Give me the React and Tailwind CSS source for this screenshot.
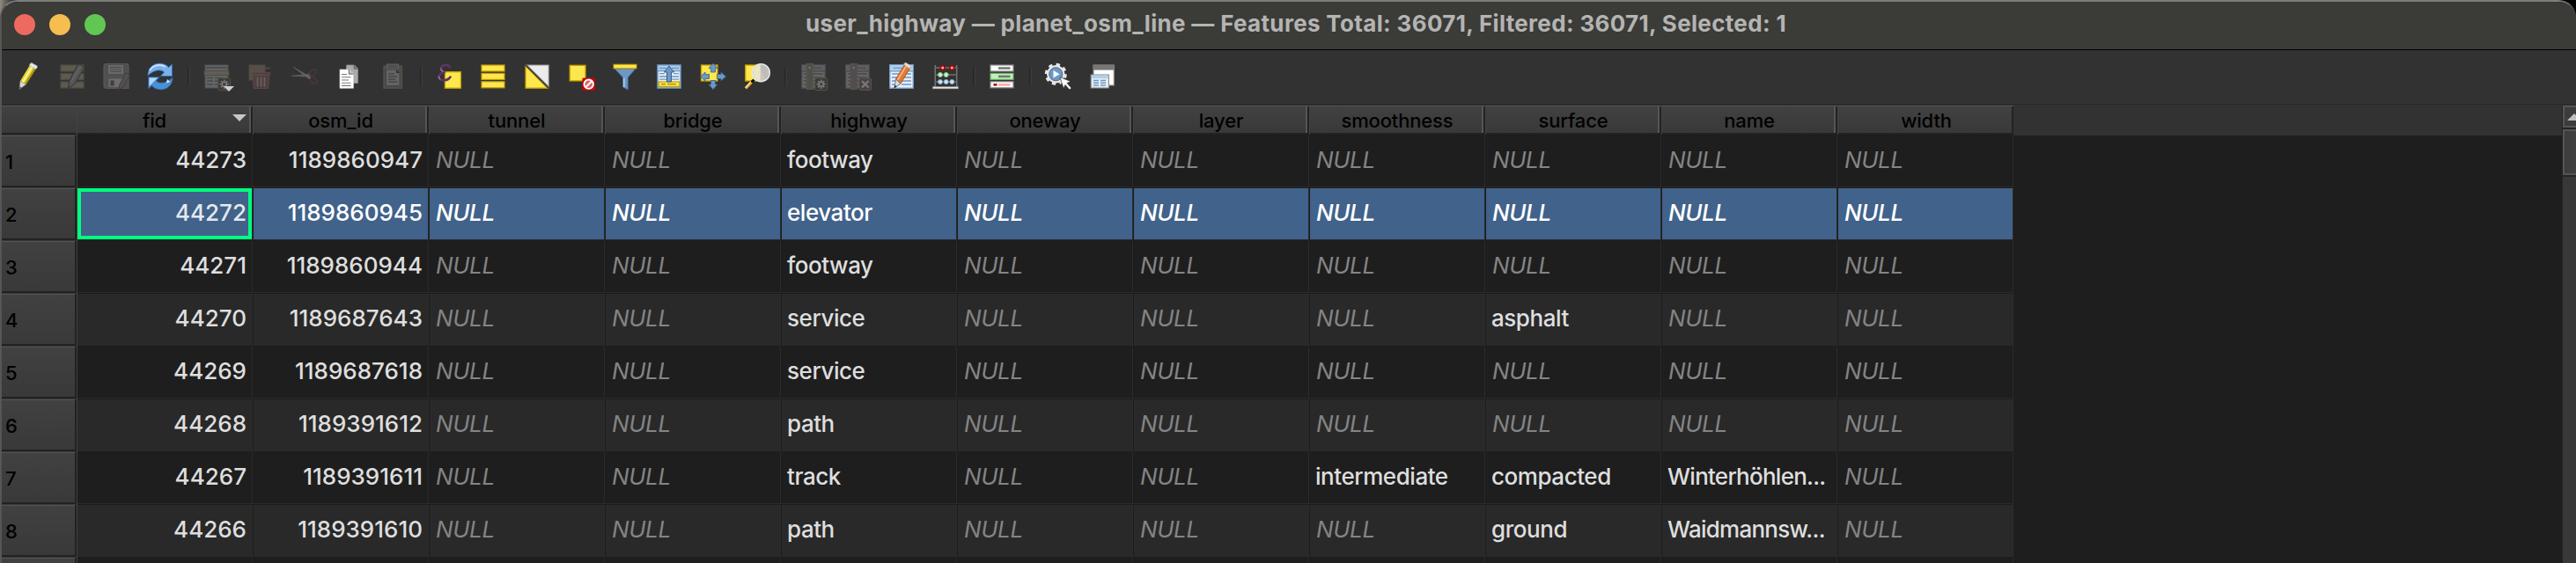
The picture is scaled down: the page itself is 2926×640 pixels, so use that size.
import React from "react";

const NAMES = ["fid", "osm_id", "tunnel", "bridge", "highway", "oneway", "layer", "smoothness", "surface", "name", "width"];

const N = null;
const ROWS = [
  ["44273", "1189860947", N, N, "footway", N, N, N, N, N, N],
  ["44272", "1189860945", N, N, "elevator", N, N, N, N, N, N],
  ["44271", "1189860944", N, N, "footway", N, N, N, N, N, N],
  ["44270", "1189687643", N, N, "service", N, N, N, "asphalt", N, N],
  ["44269", "1189687618", N, N, "service", N, N, N, N, N, N],
  ["44268", "1189391612", N, N, "path", N, N, N, N, N, N],
  ["44267", "1189391611", N, N, "track", N, N, "intermediate", "compacted", "Winterhöhlen...", N],
  ["44266", "1189391610", N, N, "path", N, N, N, "ground", "Waidmannsw...", N],
];
const SELECTED = 1;

const Y = "#fde74c";
const YB = "#c4a000";
const BL = "#6d97c4";
const BD = "#34608f";

function Icon({ dim, children }) {
  return (
    <div className="flex w-[50px] shrink-0 justify-center">
      <svg viewBox="0 0 32 32" className={dim ? "size-8 overflow-visible opacity-[0.34] saturate-[0.55]" : "size-8 overflow-visible"}>
        {children}
      </svg>
    </div>
  );
}

function Sep() {
  return (
    <div className="flex w-3.5 shrink-0 justify-center">
      <div className="h-[22px] w-[3px] border-l border-r border-l-[#282828] border-r-[#3c3c3c] bg-[#2e2e2e]" />
    </div>
  );
}

function Pencil({ body = "#e8d534", light = "#fff9a0", dark = "#a8941a" }) {
  return (
    <g>
      <path d="M7 21 L18.500 2 L25.500 6 L13.500 25 Z" fill={body} />
      <path d="M9 22 L20.500 3 L22 4 L10.500 23 Z" fill={light} />
      <path d="M11.800 24 L23.600 5 L25.500 6 L13.500 25 Z" fill={dark} />
      <path d="M18 1.500 L20 .5 L26.300 4 L26 6.500 L24.500 7.500 L17.500 3.500 Z" fill="#e6e6ea" stroke="#a9a9b0" strokeWidth=".6" />
      <path d="M7 21 L13.500 25 L6 30.500 Z" fill="#d8d8d4" stroke="#8a8a86" strokeWidth=".5" />
      <path d="M6.200 27 L8.600 28.500 L5.700 31 Z" fill="#666" />
    </g>
  );
}

function Doc({ line = BL, head = "#aed0ea", page = "#e8eef5" }) {
  return (
    <g>
      <rect x="2.700" y="2.700" width="26.600" height="26.600" fill={page} stroke={line} strokeWidth="1.400" />
      <rect x="3.400" y="3.400" width="25.200" height="6" fill={head} />
      <path d="M6.700 6.300h18.600M2.700 9.900h26.600" stroke={line} strokeWidth="1.200" />
      <path d="M5 13h9m2 0h11M5 17h9m2 0h11M5 21h9m2 0h11M5 25h9m2 0h11" stroke={line} strokeWidth="1.300" />
    </g>
  );
}

function GearBadge() {
  return (
    <g>
      <rect x="17.800" y="17.800" width="13.800" height="13.800" rx="1.500" fill="#4d462a" stroke="#a3935a" />
      <path d="M24.700 19.500v10.400M19.500 24.700h10.400M21 21l7.400 7.400M28.400 21L21 28.400" stroke="#fff" strokeWidth="1.700" />
      <circle cx="24.700" cy="24.700" r="3.200" fill="#fff" />
      <circle cx="24.700" cy="24.700" r="1.700" fill="#555" />
    </g>
  );
}

function Toolbar() {
  return (
    <div className="flex h-[61px] shrink-0 items-center bg-[#323232] pb-px pl-[5px]">
      <Icon><Pencil /></Icon>
      <Icon dim>
        <g fill="#b3a878" stroke="#8d8040" strokeWidth="1.200">
          <rect x="3" y="3" width="26" height="7" /><rect x="3" y="12.500" width="26" height="7" /><rect x="3" y="22" width="26" height="7" />
        </g>
        <path d="M12.500 21 L23 1.500 L30 5.500 L18.500 25 L11.500 29.500Z" fill="#999" stroke="#333" />
        <path d="M15 22L26 3.500" stroke="#ddd" />
      </Icon>
      <Icon dim>
        <path d="M2 4a2.500 2.500 0 0 1 2.500-2.500h23A2.500 2.500 0 0 1 30 4v25.500H4L2 27.500Z" fill="#8c8c8c" stroke="#99a37c" strokeWidth="1.200" />
        <rect x="6.500" y="2.500" width="18" height="11" fill="#d4d4d4" stroke="#888" />
        <path d="M9 5.500h13M9 8h13M9 10.500h13" stroke="#777" />
        <rect x="7.500" y="18.500" width="16" height="9.500" fill="#ddd" />
        <rect x="9.500" y="20.500" width="4" height="6" fill="#555" />
        <path d="M20 25 L27 11.500 L31.500 14.500 L24 28 L19 30.500Z" fill="#a48379" stroke="#6b5148" />
      </Icon>
      <Icon>
        <path d="M2 15 C1.500 5 11 -1.500 20.500 2 C23 3 24.500 4.200 25.500 5.500 L29.500 2 L29.500 15.500 L16.500 15.500 L20.500 11 C17 7.500 9 8 2 15Z" fill="#79b0ec" stroke="#2f6fb4" strokeWidth=".8" />
        <path d="M4 9C8 2.500 17 1.500 22 5" stroke="#c5dfff" strokeWidth="1.800" fill="none" />
        <path d="M30 17 C30.500 27 21 33.500 11.500 30 C9 29 7.500 27.800 6.500 26.500 L2.500 30 L2.500 16.500 L15.500 16.500 L11.500 21 C15 24.500 23 24 30 17Z" fill="#4b8ed4" stroke="#245f9f" strokeWidth=".8" />
        <path d="M3.500 17.500h9.500L3.500 27Z" fill="#b5d6fb" />
        <path d="M24 19l3 3-4 1.500Z" fill="#dbeaff" />
      </Icon>
      <Sep />
      <div className="relative">
        <Icon dim>
          <rect x="3" y="3" width="26" height="26" fill="#c0c4c8" stroke="#7e8d9c" />
          <path d="M4 6h24" stroke="#7a8896" strokeWidth="2" />
          <rect x="2" y="9.500" width="28" height="5" fill="#c1b486" stroke="#8d8040" />
          <path d="M5 17.500h7m2 0h8M5 21h7m2 0h3M5 25h7m2 0h3" stroke="#68798a" strokeWidth="1.500" />
          <GearBadge />
        </Icon>
        <svg viewBox="0 0 12 6" className="absolute top-[27px] left-[33px] h-1.5 w-3"><path d="M0 0h12L6 6Z" fill="#cfcfcf" /></svg>
      </div>
      <Icon dim>
        <rect x="3" y="3" width="18" height="17" fill="#9a8f60" stroke="#8a7c3a" />
        <path d="M3 6.500h24" stroke="#d56a6a" strokeWidth="1.500" />
        <path d="M6 11.500h21v2H6Z" fill="#a84848" stroke="#c86464" />
        <path d="M7 14.500h19l-1.500 15h-16Z" fill="#a05050" stroke="#cc6a6a" />
        <path d="M12.500 16.500v11M16.500 16.500v11M20.500 16.500v11" stroke="#e0b0b0" strokeWidth="1.700" />
      </Icon>
      <Icon dim>
        <path d="M1 15.300L21.500 13.200V16.200Z M3.500 5.500L23 16.800L21.500 19Z" fill="#ddd" stroke="#aaa" strokeWidth=".8" />
        <ellipse cx="25.500" cy="11.500" rx="4.500" ry="2.600" transform="rotate(-35 25.500 11.500)" fill="none" stroke="#c03a3a" strokeWidth="1.200" />
        <ellipse cx="26" cy="20.500" rx="4.500" ry="2.800" transform="rotate(45 26 20.500)" fill="none" stroke="#c03a3a" strokeWidth="1.200" />
      </Icon>
      <Icon>
        <path d="M13.500 3h9l4 4v16.500h-13Z" fill="#aaa" stroke="#8b8b8b" strokeWidth=".8" />
        <path d="M22 3v4.500h4.500" fill="#777" stroke="#666" strokeWidth=".7" />
        <path d="M6 8h10.500l5 5v16.300H6Z" fill="#fff" stroke="#cfcfcf" strokeWidth=".7" />
        <path d="M16.200 8v5.200h5.300" fill="#bbb" stroke="#555" strokeWidth=".8" />
        <path d="M8 13.500h6M8 16.800h10.500M8 20h8M8 23.200h10.500M8 26.400h10.500" stroke="#777" strokeWidth="1.100" />
      </Icon>
      <Icon dim>
        <rect x="6" y="4" width="20.500" height="25.200" fill="#867e6e" stroke="#99886a" strokeWidth="1.400" />
        <rect x="9.500" y="2" width="13" height="5" fill="#888" stroke="#bbb" />
        <path d="M8.500 8h12l3.500 3.500V26.500H8.500Z" fill="#c4c4c4" stroke="#666" />
        <path d="M20 8v4h4" fill="#333" />
        <path d="M11 13h7M11 16h10M11 19h8M11 22h10" stroke="#444" strokeWidth="1.200" />
      </Icon>
      <Sep />
      <Icon>
        <rect x="11.400" y="10.700" width="18" height="18.500" fill={Y} stroke={YB} strokeWidth="1.300" />
        <path d="M17 5.500C15.500 2 9 2 7.500 5.500C6.500 8.500 8.500 10.700 12 11C7 11 3.500 14.500 5 17.800C6.800 21.500 14.500 21.200 17.500 16.500" fill="none" stroke="#5c3566" strokeWidth="2.600" strokeLinecap="round" />
        <path d="M6.800 6.500C6.600 8.500 8 10 9.800 10.600M4.300 15.500C4 17.300 5 18.500 6.300 19.300" fill="none" stroke="#ad7fa8" strokeWidth="1.100" />
      </Icon>
      <Icon>
        <g fill={Y} stroke={YB} strokeWidth="1.200">
          <rect x="3" y="3" width="26" height="7" /><rect x="3" y="12.400" width="26" height="7" /><rect x="3" y="21.800" width="26" height="7" />
        </g>
      </Icon>
      <Icon>
        <path d="M4.500 3h24.700v24.500Z" fill="#ececec" stroke="#9a9a9a" strokeWidth="1.100" />
        <path d="M3 4v25.200h25Z" fill={Y} stroke={YB} strokeWidth="1.300" />
        <path d="M3 3L29 29" stroke="#333" strokeWidth="1.400" />
      </Icon>
      <Icon>
        <rect x="3.200" y="3.300" width="17.800" height="17.600" fill={Y} stroke={YB} strokeWidth="1.300" />
        <rect x="17.400" y="17.400" width="14.500" height="14.500" rx="1.500" fill="#cc0000" />
        <circle cx="24.700" cy="24.700" r="5.200" fill="#d96464" stroke="#fff" strokeWidth="1.900" />
        <path d="M21.200 28.200L28.200 21.200" stroke="#fff" strokeWidth="2" />
      </Icon>
      <Icon>
        <path d="M4 7h24L19.300 17V31L13.500 28V17Z" fill={BL} stroke="#3d6a9b" strokeWidth=".8" />
        <path d="M14.800 17.500V28" stroke="#b4cde8" strokeWidth="1.600" />
        <rect x="3" y="2.200" width="26" height="4.600" fill={Y} stroke={YB} strokeWidth="1" />
      </Icon>
      <Icon>
        <rect x="3" y="3" width="26" height="26" fill="#e8eef5" stroke={BL} strokeWidth="1.600" />
        <rect x="3.800" y="3.800" width="24.400" height="5.400" fill="#aed0ea" />
        <path d="M5 6.500h8m6 0h8M3 9.600h26M5 12.700h6m10 0h6M5 16h8m6 0h8M5 19.200h8m6 0h8" stroke={BL} strokeWidth="1.300" />
        <rect x="4.200" y="22" width="23.600" height="5.400" fill={Y} stroke={YB} strokeWidth="1.200" />
        <path d="M7 24.700h5m2 0h10" stroke="#a68a00" strokeWidth="1.200" />
        <path d="M16 4L21.500 11H18.500V22H13.500V11H10.500Z" fill={BL} stroke={BD} strokeWidth="1" />
      </Icon>
      <Icon>
        <rect x="2.500" y="3" width="18.500" height="18" fill={Y} stroke={YB} strokeWidth="1.300" />
        <g fill={BL} stroke={BD} strokeWidth=".8">
          <path d="M16 1L21 6.500H18.500V11H13.500V6.500H11Z" /><path d="M16 30.700L21 25H18.500V20.500H13.500V25H11Z" />
          <path d="M1.500 16L7 11V13.500H11.500V18.500H7V21Z" /><path d="M30.500 16L25 11V13.500H20.500V18.500H25V21Z" />
        </g>
      </Icon>
      <Icon>
        <rect x="2.700" y="3" width="17" height="18" fill={Y} stroke={YB} strokeWidth="1.300" />
        <path d="M3 29.500L10 22" stroke="#f0a830" strokeWidth="3.200" />
        <path d="M2.700 28.500L9 21.700" stroke="#ffe9b0" strokeWidth="1.200" />
        <path d="M9.500 22.500L12.500 19.500" stroke="#111" strokeWidth="3" />
        <circle cx="20.300" cy="11.700" r="10" fill="#c6c6c4" stroke="#e8e8e4" strokeWidth="1.500" />
        <path d="M19.700 2.500A9.300 9.300 0 0 0 19.700 21Z" fill="#e9e6c0" />
        <path d="M19.700 2.500h1.500A9.300 9.300 0 0 1 26 19Q20 12 19.700 2.500" fill="#b4b4b4" opacity=".5" />
      </Icon>
      <Sep />
      <Icon dim>
        <Doc line="#6f7780" head="#b0b6bc" page="#c9cbcd" />
        <rect x="8" y="1.500" width="7.500" height="29" fill="#8d8569" stroke="#a59c70" />
        <circle cx="11.700" cy="6" r="1.200" fill="#eee" />
        <GearBadge />
      </Icon>
      <Icon dim>
        <Doc line="#6f7780" head="#b0b6bc" page="#c9cbcd" />
        <rect x="8" y="1.500" width="7.500" height="29" fill="#93807c" stroke="#ab8c84" />
        <circle cx="11.700" cy="6" r="1.200" fill="#eee" />
        <rect x="18" y="18" width="13.500" height="13.500" rx="1.500" fill="#806058" stroke="#b48a84" />
        <path d="M21 21l7.500 7.500M28.500 21L21 28.500" stroke="#fff" strokeWidth="2.400" />
      </Icon>
      <Icon>
        <Doc />
        <path d="M9.500 19 L19.500 2.500 L26 6 L15 24 Z" fill="#e07a36" stroke="#9b4a15" strokeWidth=".8" />
        <path d="M11.500 20L21.500 3.700" stroke="#ffb98a" strokeWidth="1.500" />
        <path d="M18.500 2L20.500 0L27 4L25.300 7.200Z" fill="#e8e0dc" stroke="#a9a09c" strokeWidth=".6" />
        <path d="M9.500 19L15 24L7.800 29Z" fill="#ddd" stroke="#555" strokeWidth=".7" />
        <path d="M8.500 25.500L10.800 27.200L7.500 29.500Z" fill="#333" />
      </Icon>
      <Icon>
        <path d="M4.200 28V3M28.800 28V3" stroke="#8c8c8c" strokeWidth="1.100" />
        <path d="M4 6h25M4 14h25M4 22h25" stroke="#707070" strokeWidth="1.300" />
        <rect x="1.500" y="27.500" width="29" height="2.400" fill="#e4e4e4" stroke="#888" strokeWidth=".6" />
        <g fill="#ffb3b3" stroke="#b00000" strokeWidth="1.600"><circle cx="12.700" cy="6" r="2.300" /><circle cx="23.300" cy="6" r="2.300" /></g>
        <g fill="#c8f5c4" stroke="#86c282" strokeWidth="1"><circle cx="10" cy="14" r="2.500" /><circle cx="16.700" cy="14" r="2.500" /></g>
        <g fill="#cfe4f5" stroke="#7fa8cb" strokeWidth="1"><circle cx="10" cy="22" r="2.500" /><circle cx="16.700" cy="22" r="2.500" /><circle cx="23.300" cy="22" r="2.500" /></g>
      </Icon>
      <Sep />
      <Icon>
        <rect x="3" y="3" width="26" height="7" fill="#fff" stroke="#8a8a8a" strokeWidth="1.200" />
        <rect x="3" y="12.400" width="26" height="7" fill="#bff0b8" stroke="#69b062" strokeWidth="1.200" />
        <rect x="3" y="21.800" width="26" height="7" fill="#fff" stroke="#8a8a8a" strokeWidth="1.200" />
        <rect x="12" y="5.200" width="13.500" height="2.600" fill="#777" />
        <rect x="12" y="14.600" width="13.500" height="2.600" fill="#777" />
        <rect x="6.500" y="24" width="4" height="2.600" fill="#b00000" /><rect x="12" y="24" width="13.500" height="2.600" fill="#ffa9a9" />
      </Icon>
      <Sep />
      <Icon>
        <circle cx="13.300" cy="13.300" r="11" fill="none" stroke="#e8e8e8" strokeWidth="3" strokeDasharray="4.300 4.340" />
        <circle cx="13.300" cy="13.300" r="9" fill={BL} stroke="#e8e8e8" strokeWidth="2.600" />
        <circle cx="13.300" cy="13.300" r="7.600" fill="none" stroke={BD} strokeWidth=".8" />
        <path d="M10.500 9L17.500 13.300L10.500 17.600Z" fill="#fff" />
        <path d="M18 16.700L30 21.500L26 23.500L31 29L29 31L24 25.500L22 29.500Z" fill="#fff" stroke="#333" strokeWidth=".7" />
      </Icon>
      <Icon>
        <rect x="6" y="3" width="23.300" height="23" fill="#fff" stroke="#8a8a8a" strokeWidth="1.200" />
        <rect x="6" y="3" width="23.300" height="5.600" fill="#777" />
        <rect x="3.200" y="14" width="20.200" height="15" fill="#e8eef5" stroke="#8a8a8a" strokeWidth="1.100" />
        <rect x="3.800" y="14.600" width="19" height="3.600" fill="#aed0ea" />
        <path d="M6 20.500h6m2 0h6M6 23.300h6m2 0h6M6 26.100h6m2 0h6" stroke={BL} strokeWidth="1.500" />
      </Icon>
    </div>
  );
}

function HeaderCell({ name, first, last }) {
  return (
    <div className={`${first ? "w-[199px]" : "w-[200px]"} flex h-[34px] shrink-0 flex-col border-b border-b-[#434343]`}>
      <div className={`${first ? "" : "border-l border-l-[#434343]"} flex h-full border-t border-t-[#545454] bg-[#222]`}>
        <div
          className={`${last ? "" : "border-r-2 border-r-[#555]"} relative mr-0.5 flex h-[30px] grow items-center justify-center bg-linear-to-b from-[#414141] to-[#393939] pt-0.5 ${first ? "pr-[20px]" : "pl-[3px]"}`}
        >
          <span className="text-[22px] leading-none font-medium tracking-[-0.15px] text-black">{name}</span>
          {first && (
            <svg viewBox="0 0 16 8" className="absolute top-[9px] right-[3px] h-2 w-4">
              <path d="M0 0h16L8 8Z" fill="#c6c6c6" />
            </svg>
          )}
        </div>
      </div>
    </div>
  );
}

function RowHeader({ n }) {
  return (
    <div className="flex h-[60px] w-[86px] shrink-0 border-t border-r border-t-[#383838] border-r-[#3f3f3f] bg-[#222]">
      <div className="flex h-[57px] w-[83px] border-t border-t-[#545454] bg-linear-to-b from-[#414141] to-[#393939] pt-[18px] pl-1">
        <span className="text-[22px] leading-none font-medium text-black">{n}</span>
      </div>
    </div>
  );
}

function Cell({ value, col, row }) {
  const sel = row === SELECTED;
  const alt = row % 2 === 1;
  const bg = sel ? "bg-[#41628a]" : alt ? "bg-[#292929]" : "bg-[#1e1e1e]";
  const color = sel ? (col === 0 ? "text-[#e4e9ef]" : "text-white") : value === null ? "text-[#848484]" : "text-[#dedede]";
  const frame = sel && col === 0 ? "outline-4 -outline-offset-4 outline-[#00ff7f]" : "";
  return (
    <div
      className={`${col === 0 ? "w-[199px]" : "w-[200px] border-l border-l-[#1c1c1c]"} h-[60px] shrink-0 border-t border-r border-b border-t-[#1c1c1c] border-r-[#2b2b2b] border-b-[#2b2b2b]`}
    >
      <div className={`flex h-full items-center pb-[2px] ${bg} ${frame} ${col < 2 ? "justify-end pr-1.5" : value === null ? "pl-[7px]" : "pl-1.5"}`}>
        {value === null ? (
          <span className={`text-[26px] leading-none italic tracking-[-0.4px] ${sel ? "font-medium" : "font-normal"} ${color}`}>NULL</span>
        ) : (
          <span className={`text-[26px] leading-none font-medium whitespace-nowrap ${col < 2 ? "" : value.endsWith("...") ? "tracking-[-0.75px]" : "tracking-[-0.45px]"} ${color}`}>{value}</span>
        )}
      </div>
    </div>
  );
}

function Scrollbar() {
  return (
    <div className="flex w-4 shrink-0 flex-col overflow-hidden border-l border-l-[#242424] bg-[#383838]">
      <div className="flex h-[25px] w-[30px] shrink-0 items-center justify-start border-2 border-[#555] bg-[#3c3c3c] pl-[3px]">
        <svg viewBox="0 0 16 8" className="h-2 w-4 shrink-0"><path d="M8 0L16 8H0Z" fill="#c0c0c0" /></svg>
      </div>
      <div className="h-0.5 shrink-0 bg-[#242424]" />
      <div className="h-[52px] w-[30px] shrink-0 border-2 border-[#555] bg-linear-to-r from-[#3c3c3c] to-[#444]" />
      <div className="h-0.5 shrink-0 bg-[#262626]" />
    </div>
  );
}

export default function App() {
  return (
    <div className="h-[640px] w-[2926px] overflow-hidden bg-linear-to-r from-[#8f8b80] via-black via-1% to-black font-[Inter,'Noto_Sans',sans-serif]">
      <div className="flex h-[640px] flex-col overflow-hidden rounded-t-[20px] border-t-2 border-l-2 border-t-[#7d7d7c] border-l-[#565656] bg-[#1e1e1e]">
        <div className="relative flex h-[54px] shrink-0 items-center bg-[#3b3b38] pb-0.5">
          <div className="flex gap-4 pl-3.5">
            <div className="size-6 rounded-full bg-[#ed6a5f]" />
            <div className="size-6 rounded-full bg-[#f5be4f]" />
            <div className="size-6 rounded-full bg-[#62c655]" />
          </div>
          <div className="absolute inset-0 flex items-center justify-center pb-1 pl-[16px]">
            <span className="text-[26px] leading-none font-bold tracking-[0.33px] whitespace-nowrap text-[#b4b4b2]">
              user_highway — planet_osm_line — Features Total: 36071, Filtered: 36071, Selected: 1
            </span>
          </div>
        </div>
        <div className="h-px shrink-0 bg-black" />
        <Toolbar />
        <div className="h-px shrink-0 bg-[#272727]" />
        <div className="h-px shrink-0 bg-[#323232]" />
        <div className="flex min-h-0 grow overflow-hidden">
          <div className="flex grow flex-col overflow-hidden">
            <div className="flex h-[34px] shrink-0 bg-[#323232]">
              <div className="h-[34px] w-[86px] shrink-0 border-r border-r-[#434343] bg-[#222]">
                <div className="h-[31px] border-t border-t-[#545454] bg-linear-to-b from-[#414141] to-[#393939]" />
              </div>
              {NAMES.map((n, i) => (
                <HeaderCell key={n} name={n} first={i === 0} last={i === NAMES.length - 1} />
              ))}
            </div>
            <div className="-mt-px flex shrink-0 flex-col">
              {ROWS.map((r, i) => (
                <div key={i} className="flex h-[60px] shrink-0">
                  <RowHeader n={i + 1} />
                  {r.map((v, c) => (
                    <Cell key={c} value={v} col={c} row={i} />
                  ))}
                </div>
              ))}
              <div className="flex h-[60px] shrink-0">
                <RowHeader n="" />
                {NAMES.map((n, c) => (
                  <Cell key={n} value="" col={c} row={8} />
                ))}
              </div>
            </div>
          </div>
          <Scrollbar />
        </div>
      </div>
    </div>
  );
}
